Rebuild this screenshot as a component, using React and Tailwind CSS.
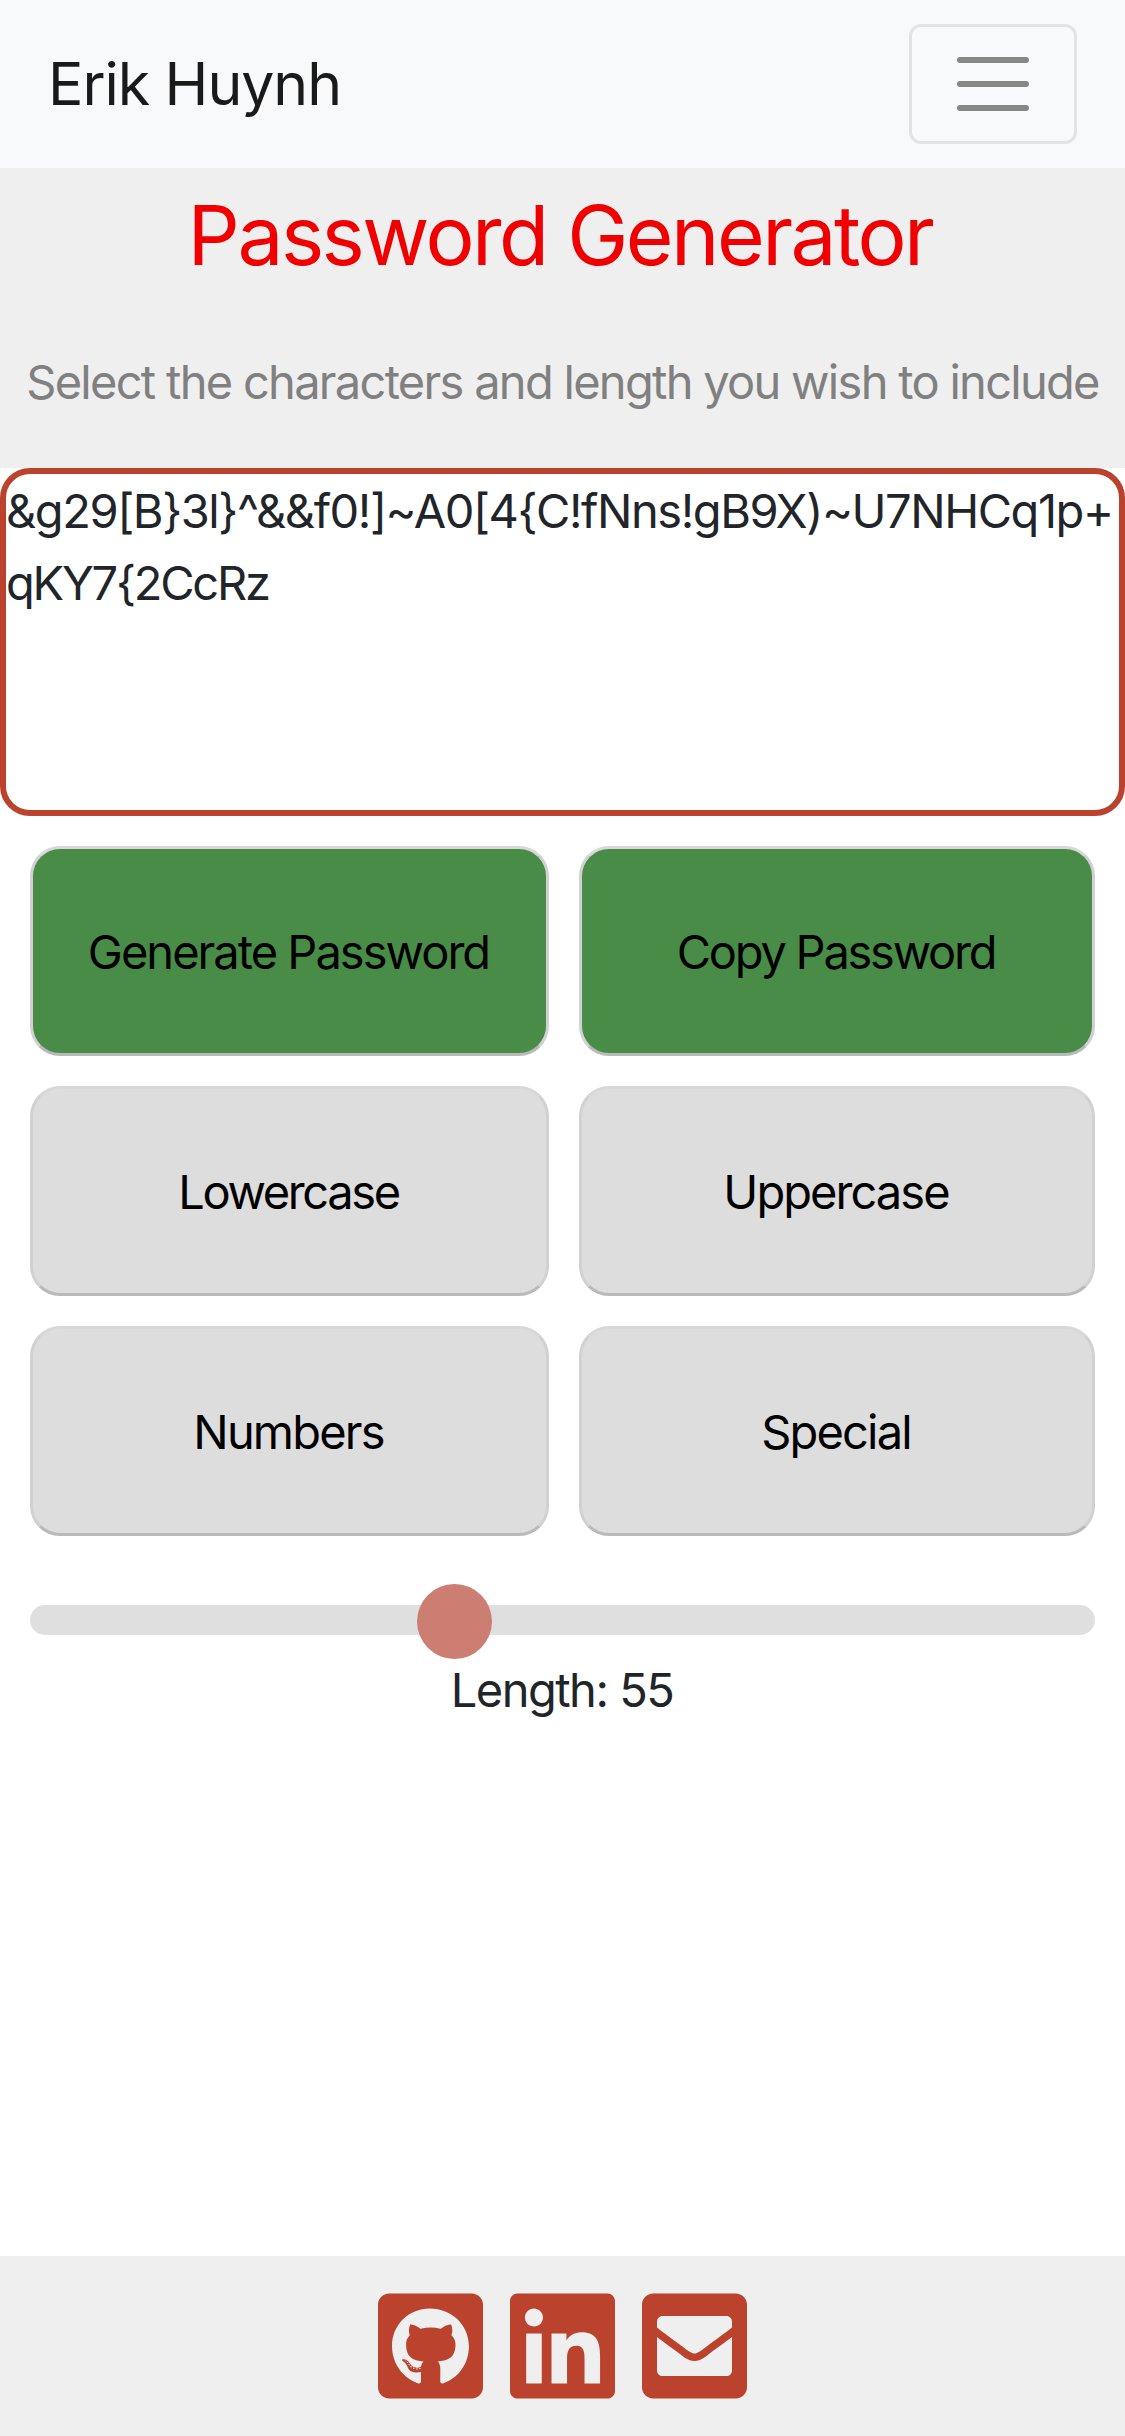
import { FaGithubSquare, FaLinkedin, FaEnvelopeSquare } from "react-icons/fa";

const buttonBase =
  "flex h-[210px] items-center justify-center rounded-[30px] border-[3px] border-t-[#d8d8d8] border-x-[#d1d1d1] border-b-[#b9b9b9] pt-[2px] pr-[2px] text-[47px] text-black";

const buttons = [
  { label: "Generate Password", className: "bg-[#488c48] tracking-[-1.97px]" },
  { label: "Copy Password", className: "bg-[#488c48] tracking-[-2.23px]" },
  { label: "Lowercase", className: "bg-[#dddddd] tracking-[-2.37px]" },
  { label: "Uppercase", className: "bg-[#dddddd] tracking-[-1.94px]" },
  { label: "Numbers", className: "bg-[#dddddd] tracking-[-1.8px]" },
  { label: "Special", className: "bg-[#dddddd] tracking-[-1.83px]" },
];

const links = [
  { name: "GitHub", Icon: FaGithubSquare },
  { name: "LinkedIn", Icon: FaLinkedin },
  { name: "Email", Icon: FaEnvelopeSquare },
];

function Navbar() {
  return (
    <nav className="flex h-[168px] items-center justify-between bg-[#f8f9fb] px-12">
      <a className="text-[59px] tracking-[-1.05px] text-[#1a1a1a]">Erik Huynh</a>
      <button
        aria-label="Toggle navigation"
        className="flex h-[120px] w-[168px] flex-col items-center justify-center gap-[18px] rounded-xl border-[3px] border-[#e2e3e4]"
      >
        <span className="h-1.5 w-[72px] rounded-full bg-[#868787]" />
        <span className="h-1.5 w-[72px] rounded-full bg-[#868787]" />
        <span className="h-1.5 w-[72px] rounded-full bg-[#868787]" />
      </button>
    </nav>
  );
}

function LengthSlider({ value, min, max }) {
  const ratio = (value - min) / (max - min);
  return (
    <div className="relative mx-[30px] mt-[69px] h-[30px] rounded-full bg-[#dfdfdf]">
      <div
        className="absolute -top-[21px] size-[75px] rounded-full bg-[#cd7e73]"
        style={{ left: `calc((100% - 75px) * ${ratio})` }}
      />
    </div>
  );
}

export default function App() {
  return (
    <div className="flex h-[2436px] w-full flex-col overflow-hidden bg-white font-[Inter,sans-serif] text-[#212529]">
      <Navbar />
      <header className="h-[300px] bg-[#efefef] pt-[18px] text-center whitespace-nowrap">
        <h1 className="pr-[5px] text-[82px] leading-[100px] tracking-[-2.55px] text-[#f00000]">
          Password Generator
        </h1>
        <p className="mt-[60px] text-[47px] leading-[72px] tracking-[-1.71px] text-[#808080]">
          Select the characters and length you wish to include
        </p>
      </header>
      <div className="h-[348px] rounded-[30px] border-[6px] border-[#bb422c] pt-px text-[47px] leading-[72px] whitespace-nowrap">
        <span className="block tracking-[-1.44px]">{"&g29[B}3l}^&&f0!]~A0[4{C!fNns!gB9X)~U7NHCq1p+"}</span>
        <span className="block tracking-[-2.22px]">{"qKY7{2CcRz"}</span>
      </div>
      <div className="mx-[30px] mt-[30px] grid grid-cols-[519px_516px] gap-[30px]">
        {buttons.map(({ label, className }) => (
          <button key={label} className={`${buttonBase} ${className}`}>
            {label}
          </button>
        ))}
      </div>
      <LengthSlider value={55} min={10} max={125} />
      <p className="mt-[19px] pr-px text-center text-[47px] leading-[72px] tracking-[-1.5px]">Length: 55</p>
      <footer className="mt-auto flex h-[180px] justify-center gap-[27px] bg-[#efefef] pt-[30px]">
        {links.map(({ name, Icon }) => (
          <a key={name} aria-label={name} className="h-[120px] w-[105px]">
            <Icon className="h-[120px] w-[105px] text-[#bb422c]" />
          </a>
        ))}
      </footer>
    </div>
  );
}
